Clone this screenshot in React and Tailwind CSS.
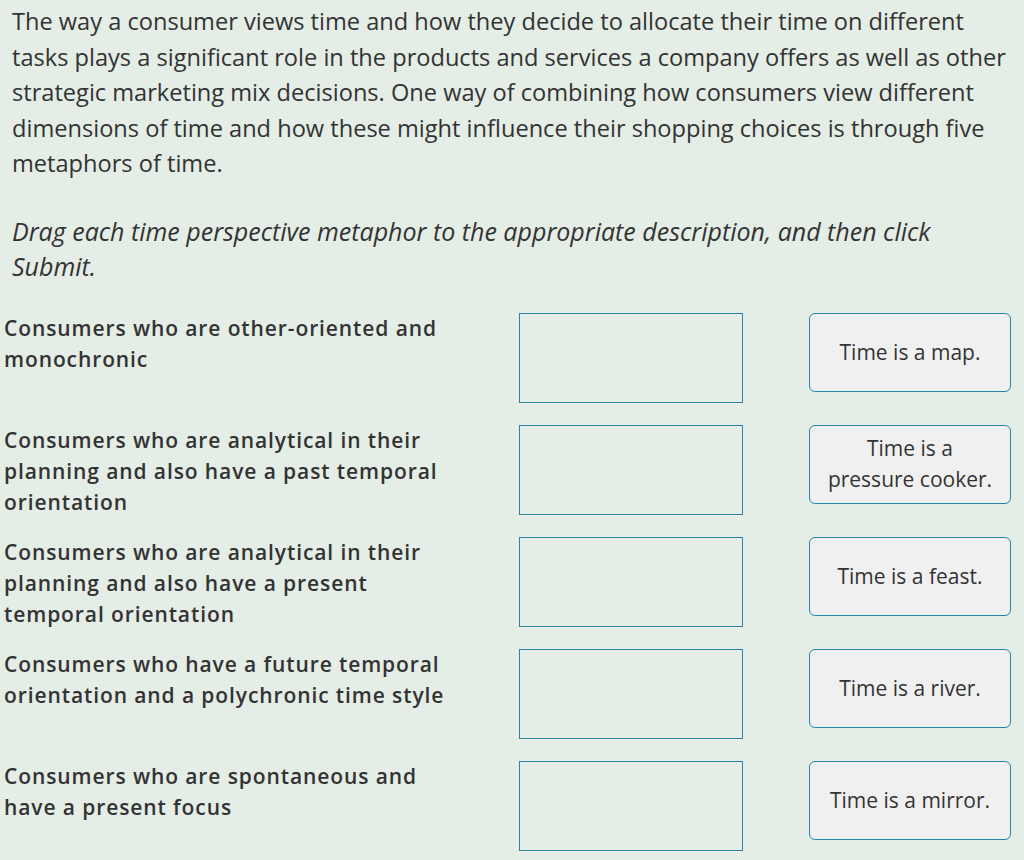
const rows = [
  { label: "Consumers who are other-oriented and monochronic", card: "Time is a map." },
  {
    label: "Consumers who are analytical in their planning and also have a past temporal orientation",
    card: "Time is a pressure cooker.",
  },
  {
    label: "Consumers who are analytical in their planning and also have a present temporal orientation",
    card: "Time is a feast.",
  },
  {
    label: "Consumers who have a future temporal orientation and a polychronic time style",
    card: "Time is a river.",
  },
  { label: "Consumers who are spontaneous and have a present focus", card: "Time is a mirror." },
];

export default function App() {
  return (
    <div className="w-[1024px] h-[860px] overflow-hidden bg-[#e4ede6] text-[#333333] font-['Open_Sans',sans-serif]">
      <div className="pt-[4px] pl-[12px] pr-[4px]">
        <p className="text-[23.6px] leading-[35.5px]">
          The way a consumer views time and how they decide to allocate their time on different
          tasks plays a significant role in the products and services a company offers as well as other
          strategic marketing mix decisions. One way of combining how consumers view different
          dimensions of time and how these might influence their shopping choices is through five
          metaphors of time.
        </p>
        <p className="mt-[32px] text-[25px] leading-[35.5px] italic">
          Drag each time perspective metaphor to the appropriate description, and then click
          Submit.
        </p>
      </div>

      <div className="mt-[28px] flex flex-col gap-[22px]">
        {rows.map((row, i) => (
          <div key={i} className="flex items-start h-[90px]">
            <div className="w-[519px] pl-[4px]">
              <p className="w-[450px] text-[21px] leading-[31px] font-semibold tracking-[0.9px]">
                {row.label}
              </p>
            </div>
            <div className="w-[224px] h-[90px] border border-[#2a86a6] shrink-0" />
            <div className="ml-[66px] w-[202px] h-[79px] shrink-0 rounded-[6px] border border-[#2a86a6] bg-[#f0f0f0] flex items-center justify-center px-[14px] text-center text-[21px] leading-[31px]">
              {row.card}
            </div>
          </div>
        ))}
      </div>
    </div>
  );
}
